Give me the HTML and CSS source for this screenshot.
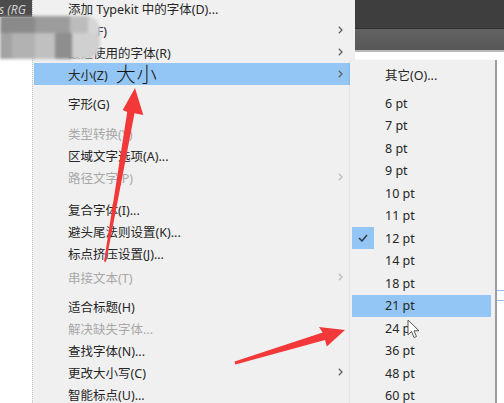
FILE: index.html
```html
<!DOCTYPE html>
<html lang="zh-CN">
<head>
<meta charset="utf-8">
<title>文字菜单 - 大小</title>
<link rel="stylesheet" href="styles.css">
</head>
<body>
<div class="screen">
  <div class="left-strip">
    <div class="doc-tab"><span>s (RG</span></div>
  </div>

  <div class="menu main-menu">
    <div class="menu-list">
      <div class="item"><span class="label">添加 Typekit 中的字体(D)...</span></div>
      <div class="item"><span class="label">字体(F)</span><svg class="chev" viewBox="0 0 5 8"><polyline points="0.8,0.8 4,4 0.8,7.2"/></svg></div>
      <div class="item"><span class="label">最近使用的字体(R)</span><svg class="chev" viewBox="0 0 5 8"><polyline points="0.8,0.8 4,4 0.8,7.2"/></svg></div>
      <div class="item active"><span class="label">大小(Z)</span><span class="note">大小</span><svg class="chev" viewBox="0 0 5 8"><polyline points="0.8,0.8 4,4 0.8,7.2"/></svg></div>
      <div class="sep sep-7"></div>
      <div class="item"><span class="label">字形(G)</span></div>
      <div class="sep sep-8"></div>
      <div class="item disabled"><span class="label">类型转换(Y)</span></div>
      <div class="item"><span class="label">区域文字选项(A)...</span></div>
      <div class="item disabled"><span class="label">路径文字(P)</span><svg class="chev" viewBox="0 0 5 8"><polyline points="0.8,0.8 4,4 0.8,7.2"/></svg></div>
      <div class="sep sep-10"></div>
      <div class="item"><span class="label">复合字体(I)...</span></div>
      <div class="item"><span class="label">避头尾法则设置(K)...</span></div>
      <div class="item"><span class="label">标点挤压设置(J)...</span></div>
      <div class="sep sep-2"></div>
      <div class="item disabled"><span class="label">串接文本(T)</span><svg class="chev" viewBox="0 0 5 8"><polyline points="0.8,0.8 4,4 0.8,7.2"/></svg></div>
      <div class="sep sep-7"></div>
      <div class="item"><span class="label">适合标题(H)</span></div>
      <div class="item disabled"><span class="label">解决缺失字体...</span></div>
      <div class="item"><span class="label">查找字体(N)...</span></div>
      <div class="item"><span class="label">更改大小写(C)</span><svg class="chev" viewBox="0 0 5 8"><polyline points="0.8,0.8 4,4 0.8,7.2"/></svg></div>
      <div class="item"><span class="label">智能标点(U)...</span></div>
    </div>
  </div>

  <div class="right-col">
    <div class="titlebar">
      <div class="bar-top"></div>
      <div class="bar-bottom"></div>
    </div>
    <div class="canvas"><div class="guide"></div></div>
  </div>

  <div class="menu sub-menu">
    <div class="sub-item"><span class="mark"></span><span class="label">其它(O)...</span></div>
    <div class="sep sep-6"></div>
    <div class="sub-item"><span class="mark"></span><span class="label">6 pt</span></div>
    <div class="sub-item"><span class="mark"></span><span class="label">7 pt</span></div>
    <div class="sub-item"><span class="mark"></span><span class="label">8 pt</span></div>
    <div class="sub-item"><span class="mark"></span><span class="label">9 pt</span></div>
    <div class="sub-item"><span class="mark"></span><span class="label">10 pt</span></div>
    <div class="sub-item"><span class="mark"></span><span class="label">11 pt</span></div>
    <div class="sub-item"><span class="mark on"><svg class="check" viewBox="0 0 10 8"><polyline points="1,4 4,7 9,1"/></svg></span><span class="label">12 pt</span></div>
    <div class="sub-item"><span class="mark"></span><span class="label">14 pt</span></div>
    <div class="sub-item"><span class="mark"></span><span class="label">18 pt</span></div>
    <div class="sub-item active"><span class="mark"></span><span class="label">21 pt</span></div>
    <div class="sub-item"><span class="mark"></span><span class="label">24 pt</span></div>
    <div class="sub-item"><span class="mark"></span><span class="label">36 pt</span></div>
    <div class="sub-item"><span class="mark"></span><span class="label">48 pt</span></div>
    <div class="sub-item"><span class="mark"></span><span class="label">60 pt</span></div>
  </div>

  <div class="mosaic">
    <div class="mosaic-row row-a">
      <span class="blk w35 g1"></span><span class="blk w35 g2"></span><span class="blk w18 g3"></span><span class="blk fill g4"></span>
    </div>
    <div class="mosaic-row row-b">
      <span class="blk w12 g5"></span><span class="blk w23 g6"></span><span class="blk w20 g7"></span><span class="blk w17 g8"></span><span class="blk fill g9"></span>
    </div>
  </div>

  <svg class="arrows" viewBox="0 0 504 403">
    <polygon points="135,88 143.3,115 134.5,113.3 106,262 104,261.5 127.2,112 122.7,110"/>
    <polygon points="345,330 326.8,346.5 325,340.1 235.4,364.4 234.6,361.6 322.7,332.5 319,327"/>
  </svg>

  <svg class="cursor" viewBox="0 0 13 20">
    <path d="M1,1 L1,16 L4.5,12.5 L7,18.5 L9.5,17.5 L7,11.8 L12,11.8 Z"/>
  </svg>
</div>
</body>
</html>
```

FILE: styles.css
```css
html, body {
  margin: 0;
  padding: 0;
}

body {
  width: 504px;
  height: 403px;
  overflow: hidden;
  background: #ffffff;
  font-family: "Noto Sans", "Noto Sans CJK SC", sans-serif;
}

.screen {
  position: relative;
  display: flex;
  width: 504px;
  height: 403px;
  overflow: hidden;
  background: #ffffff;
}

/* left strip: document tab */
.left-strip {
  width: 32px;
  flex: none;
}

.doc-tab {
  height: 17px;
  background: #4c4c4c;
  color: #d2d2d2;
  font-size: 12px;
  line-height: 19px;
  white-space: nowrap;
  overflow: hidden;
  font-style: italic;
  text-indent: -1px;
}

/* main menu */
.menu {
  background: #f0f0f0;
}

.main-menu {
  width: 321px;
  flex: none;
  border-left: 1px dotted #c2c2c2;
  padding-left: 1px;
  overflow: hidden;
}

.menu-list {
  margin-top: -3px;
}

.item {
  display: flex;
  align-items: center;
  height: 22px;
  padding: 0 12px 0 34px;
  font-size: 12.5px;
  color: #262626;
  white-space: nowrap;
}

.item.active {
  background: #93c6f4;
}

.item.disabled {
  color: #a8a8a8;
}

.chev {
  margin-left: auto;
  width: 5px;
  height: 8px;
  flex: none;
  fill: none;
  stroke: #606060;
  stroke-width: 1.3;
}

.item.disabled .chev {
  stroke: #bdbdbd;
}

.note {
  margin-left: 8px;
  font-family: "Noto Sans CJK SC", sans-serif;
  font-size: 20px;
  font-weight: 300;
  line-height: 20px;
  height: 20px;
  letter-spacing: 1px;
  color: #141414;
}

.sep-2 { height: 2px; }
.sep-6 { height: 6.5px; }
.sep-7 { height: 7px; }
.sep-8 { height: 8px; }
.sep-10 { height: 10px; }

/* right column: dark title bars + white canvas */
.right-col {
  flex: 1;
  display: flex;
  flex-direction: column;
}

.bar-top {
  height: 28px;
  background: #3e3e3e;
  border-bottom: 1px solid #2f2f2f;
}

.bar-bottom {
  height: 21px;
  background: linear-gradient(#626262, #585858);
  border-bottom: 2px solid #b9b9b9;
}

.canvas {
  flex: 1;
  background: #ffffff;
}

.guide {
  margin: 238px 0 0 142px;
  height: 9px;
  border-top: 1px solid #9bbbe8;
  border-bottom: 1px solid #9bbbe8;
}

/* size submenu */
.sub-menu {
  position: absolute;
  left: 350px;
  top: 60px;
  width: 143px;
  height: 343px;
  padding: 3px 0 0 2px;
  border-right: 2px solid #9d9d9d;
  border-top-left-radius: 3px;
  box-shadow: -1px 0 2px rgba(0, 0, 0, 0.07);
}

.sub-item {
  display: flex;
  align-items: center;
  width: 139px;
  height: 22.5px;
  font-size: 12.5px;
  color: #262626;
  white-space: nowrap;
}

.sub-item.active {
  background: #93c6f4;
}

.mark {
  width: 22px;
  height: 22px;
  flex: none;
  margin-right: 11px;
  display: flex;
  align-items: center;
  justify-content: center;
}

.mark.on {
  background: #93c6f4;
}

.check {
  width: 10px;
  height: 8px;
  fill: none;
  stroke: #2f3a48;
  stroke-width: 1.5;
}

/* blurred mosaic over the top-left corner */
.mosaic {
  position: absolute;
  left: 0;
  top: 16px;
  width: 100px;
  height: 43px;
  display: flex;
  flex-direction: column;
  border-radius: 0 14px 14px 0;
  overflow: hidden;
  filter: blur(1.6px);
}

.mosaic-row {
  display: flex;
}

.row-a { height: 17px; }
.row-b { height: 26px; }

.blk { display: block; height: 100%; }
.w12 { width: 12px; }
.w17 { width: 17px; }
.w18 { width: 18px; }
.w20 { width: 20px; }
.w23 { width: 23px; }
.w35 { width: 35px; }
.fill { flex: 1; }

.g1 { background: #8a8a8a; }
.g2 { background: #9c9c9c; }
.g3 { background: #bcbcbc; }
.g4 { background: #d6d6d6; }
.g5 { background: #a3a3a3; }
.g6 { background: #b2b2b2; }
.g7 { background: #c0c0c0; }
.g8 { background: #8e8e8e; }
.g9 { background: #d0d0d0; }

/* annotation arrows */
.arrows {
  position: absolute;
  left: 0;
  top: 0;
  width: 504px;
  height: 403px;
  pointer-events: none;
}

.arrows polygon {
  fill: #f23838;
}

/* mouse pointer */
.cursor {
  position: absolute;
  left: 407px;
  top: 319px;
  width: 13px;
  height: 20px;
  fill: #ffffff;
  stroke: #5a5a5a;
  stroke-width: 1;
  stroke-linejoin: round;
}
```
